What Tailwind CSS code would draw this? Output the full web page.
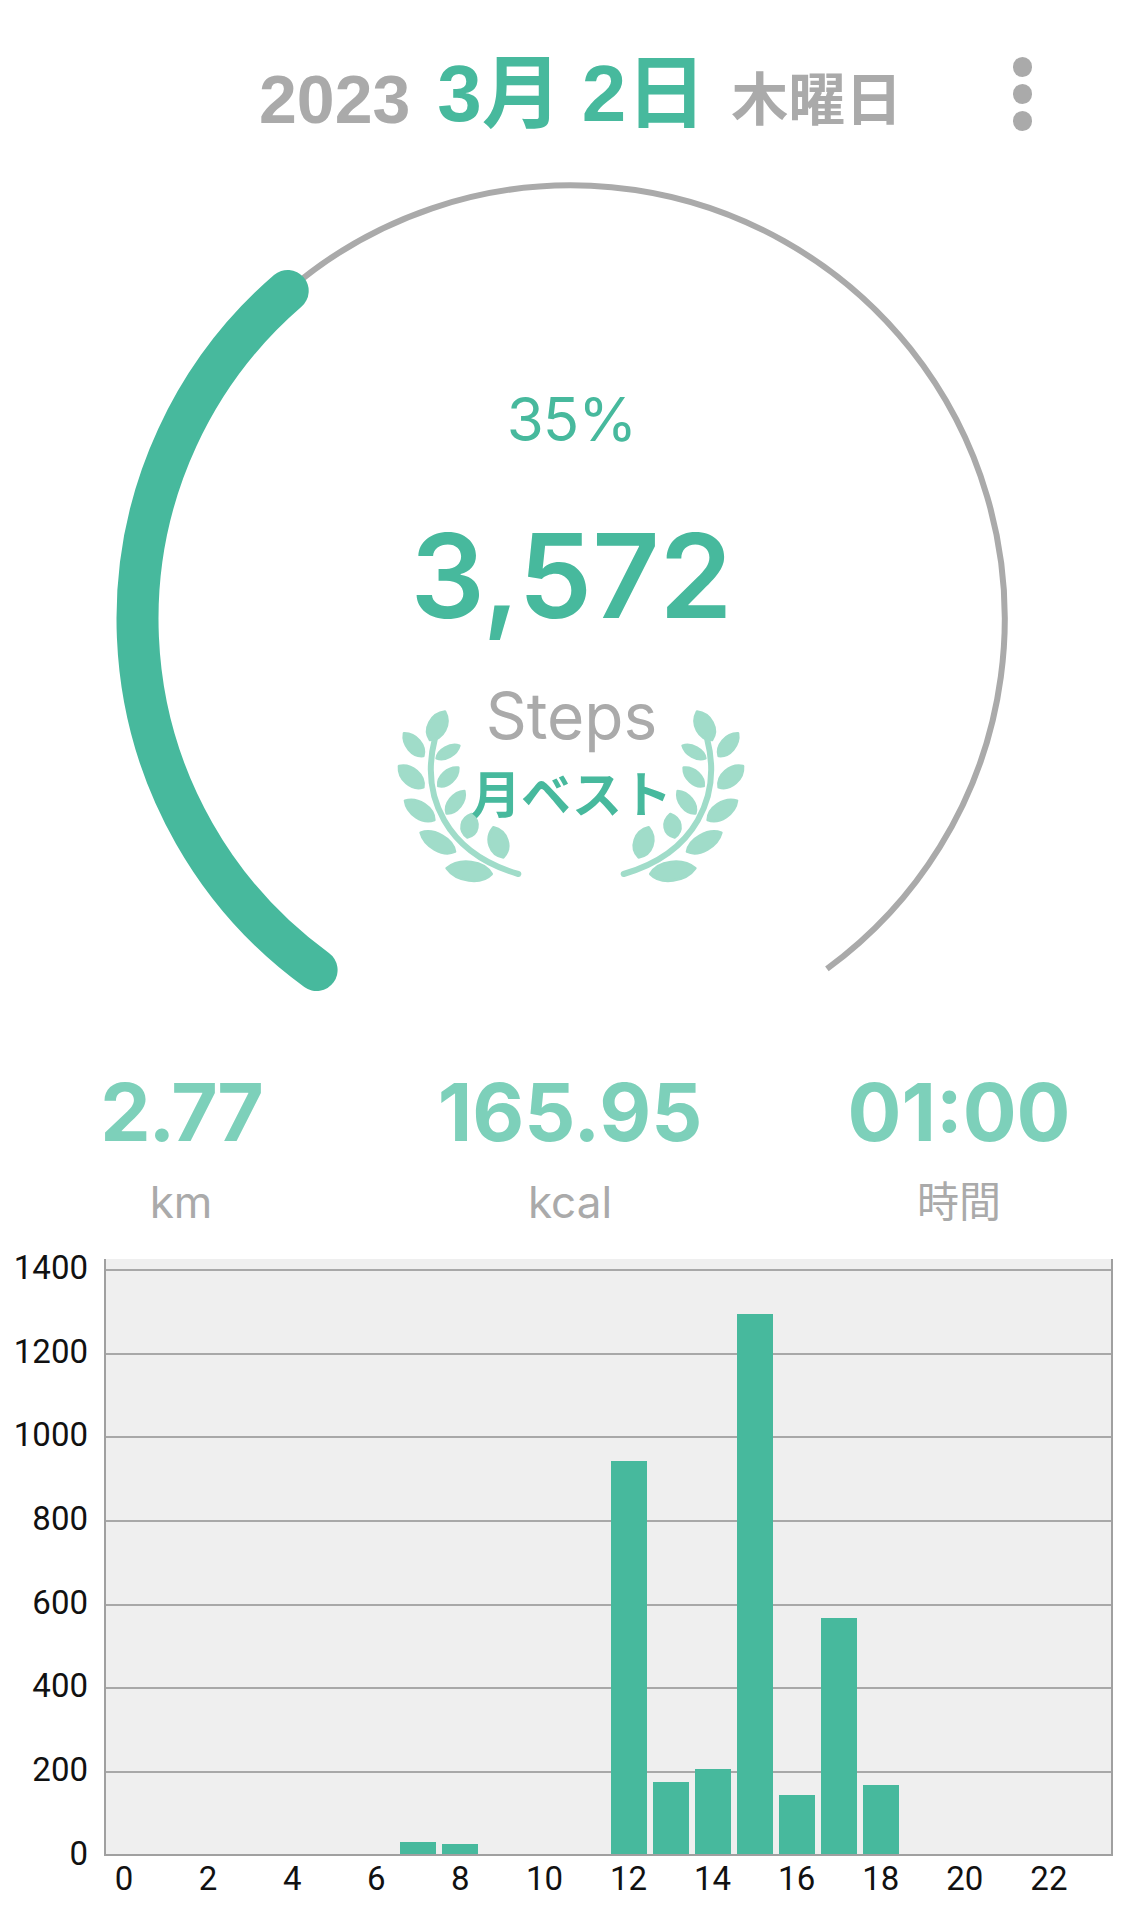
<!DOCTYPE html>
<html lang="ja">
<head>
<meta charset="utf-8">
<script src="https://cdn.jsdelivr.net/npm/@tailwindcss/browser@4"></script>
</head>
<body class="bg-white">
<div class="w-[1143px] h-[1920px] overflow-hidden bg-white font-['Inter','Noto_Sans_CJK_JP',sans-serif]">

  <!-- header -->
  <header class="h-[150px] pl-[259px] pr-[111px] flex items-start justify-between">
    <div class="flex items-baseline pt-[46px] h-[150px] font-['Liberation_Sans','Noto_Sans_CJK_JP',sans-serif] font-bold">
      <span class="text-[68px] leading-[100px] text-[#aaaaaa]">2023</span>
      <span class="ml-[27px] -translate-y-[2px] text-[80px] leading-[100px] text-[#47b99d]">3月</span>
      <span class="ml-[20px] -translate-y-[2px] text-[80px] leading-[100px] text-[#47b99d]">2日</span>
      <span class="ml-[25px] -translate-y-[3px] text-[57px] leading-[100px] text-[#aaaaaa]">木曜日</span>
    </div>
    <div class="pt-[57px] flex flex-col gap-[7px]">
      <span class="block w-[19px] h-[20px] rounded-full bg-[#aaaaaa]"></span>
      <span class="block w-[19px] h-[20px] rounded-full bg-[#aaaaaa]"></span>
      <span class="block w-[19px] h-[20px] rounded-full bg-[#aaaaaa]"></span>
    </div>
  </header>

  <!-- gauge -->
  <section class="relative h-[880px]">
    <svg class="absolute left-0 top-0" width="1143" height="880" viewBox="0 150 1143 880" fill="none">
      <path d="M287.7 290.9 A433.5 433.5 0 1 1 826.9 968.9" stroke="#aaaaaa" stroke-width="6"/>
      <path d="M287.7 290.9 A433.5 433.5 0 0 0 316.6 970" stroke="#47b99d" stroke-width="42" stroke-linecap="round"/>
    </svg>
    <svg class="absolute left-[380px] top-[530px]" width="380" height="230" viewBox="0 0 1140 690">
      <g id="laurel" fill="#a0dcc9" stroke="#a0dcc9" stroke-width="8" stroke-linejoin="round">
        <path d="M165 175 C120 350 200 520 415 582" fill="none" stroke-width="18" stroke-linecap="round"/>
        <path d="M150 180 C190 179 215 132 195 95 C153 100 128 147 150 180Z"/>
        <path d="M130 228 C139 196 108 159 72 160 C66 195 97 232 130 228Z"/>
        <path d="M170 235 C194 245 231 224 238 197 C211 188 174 209 170 235Z"/>
        <path d="M130 322 C136 285 96 250 57 258 C54 298 94 333 130 322Z"/>
        <path d="M175 318 C203 325 236 295 235 263 C204 259 171 289 175 318Z"/>
        <path d="M163 420 C162 382 114 350 75 362 C80 402 128 434 163 420Z"/>
        <path d="M200 400 C231 402 260 365 253 333 C220 335 191 372 200 400Z"/>
        <path d="M262 472 C296 464 303 426 275 402 C241 414 234 452 262 472Z"/>
        <path d="M225 515 C219 476 163 444 122 458 C133 500 189 532 225 515Z"/>
        <path d="M370 532 C399 502 382 452 340 442 C312 476 329 526 370 532Z"/>
        <path d="M335 582 C313 542 239 532 200 565 C229 606 303 616 335 582Z"/>
      </g>
      <use href="#laurel" transform="matrix(-1 0 0 1 1146 0)"/>
    </svg>
    <div class="relative flex flex-col items-center pt-[229px]">
      <div class="h-[80px] text-[60px] leading-[80px] tracking-[-1px] text-[#47b99d]">35%</div>
      <div class="mt-[57px] h-[120px] text-[117px] leading-[120px] font-semibold text-[#47b99d]">3,572</div>
      <div class="mt-[40px] h-[80px] text-[64px] leading-[80px] text-[#aaaaaa]">Steps</div>
      <div class="mt-[1px] h-[76px] text-[50px] leading-[76px] font-semibold text-[#47b99d]">月ベスト</div>
    </div>
  </section>

  <!-- stats -->
  <section class="h-[198px] pl-[31px] pr-[34px] flex justify-between">
    <div class="w-[300px] flex flex-col items-center">
      <div class="pt-[37px] h-[147px] text-[80px] leading-[90px] tracking-[-2px] font-bold text-[#7dd0ba]">2.77</div>
      <div class="h-[50px] text-[44px] leading-[50px] text-[#aaaaaa]">km</div>
    </div>
    <div class="w-[300px] flex flex-col items-center">
      <div class="pt-[37px] h-[147px] text-[80px] leading-[90px] font-bold text-[#7dd0ba]">165.95</div>
      <div class="h-[50px] text-[44px] leading-[50px] text-[#aaaaaa]">kcal</div>
    </div>
    <div class="w-[300px] flex flex-col items-center">
      <div class="pt-[37px] h-[147px] text-[80px] leading-[90px] font-bold text-[#7dd0ba]">01:00</div>
      <div class="h-[50px] text-[42px] leading-[50px] text-[#aaaaaa]">時間</div>
    </div>
  </section>

  <!-- chart -->
  <section class="flex font-['Roboto',sans-serif] text-[#111111] text-[33px]">
    <div class="w-[104px] -mt-[2px] pr-[16px] text-right">
      <div class="h-[83.7px] leading-[83.7px]">1400</div>
      <div class="h-[83.7px] leading-[83.7px]">1200</div>
      <div class="h-[83.7px] leading-[83.7px]">1000</div>
      <div class="h-[83.7px] leading-[83.7px]">800</div>
      <div class="h-[83.7px] leading-[83.7px]">600</div>
      <div class="h-[83.7px] leading-[83.7px]">400</div>
      <div class="h-[83.7px] leading-[83.7px]">200</div>
      <div class="h-[83.7px] leading-[83.7px]">0</div>
    </div>
    <div class="w-[1009px]">
      <div class="relative mt-[31px] h-[597px] pt-[10px] bg-[#efefef] border-l-2 border-r-2 border-b-2 border-[#a0a0a0]">
        <div class="h-[83.7px] border-t-2 border-[#a8a8a8]"></div>
        <div class="h-[83.7px] border-t-2 border-[#a8a8a8]"></div>
        <div class="h-[83.7px] border-t-2 border-[#a8a8a8]"></div>
        <div class="h-[83.7px] border-t-2 border-[#a8a8a8]"></div>
        <div class="h-[83.7px] border-t-2 border-[#a8a8a8]"></div>
        <div class="h-[83.7px] border-t-2 border-[#a8a8a8]"></div>
        <div class="h-[83.7px] border-t-2 border-[#a8a8a8]"></div>
        <div class="absolute left-[-3px] right-[-1px] bottom-0 top-0 grid grid-cols-24 items-end">
          <div></div><div></div><div></div><div></div><div></div><div></div><div></div>
          <div class="mx-[3px] h-[12px] bg-[#47b99d]"></div>
          <div class="mx-[3px] h-[10px] bg-[#47b99d]"></div>
          <div></div><div></div><div></div>
          <div class="mx-[3px] h-[393px] bg-[#47b99d]"></div>
          <div class="mx-[3px] h-[72px] bg-[#47b99d]"></div>
          <div class="mx-[3px] h-[85px] bg-[#47b99d]"></div>
          <div class="mx-[3px] h-[540px] bg-[#47b99d]"></div>
          <div class="mx-[3px] h-[59px] bg-[#47b99d]"></div>
          <div class="mx-[3px] h-[236px] bg-[#47b99d]"></div>
          <div class="mx-[3px] h-[69px] bg-[#47b99d]"></div>
          <div></div><div></div><div></div><div></div><div></div>
        </div>
      </div>
      <div class="flex pt-[5px] -ml-[22px] text-center leading-[36px]">
        <div class="w-[84.08px]">0</div><div class="w-[84.08px]">2</div><div class="w-[84.08px]">4</div><div class="w-[84.08px]">6</div><div class="w-[84.08px]">8</div><div class="w-[84.08px]">10</div><div class="w-[84.08px]">12</div><div class="w-[84.08px]">14</div><div class="w-[84.08px]">16</div><div class="w-[84.08px]">18</div><div class="w-[84.08px]">20</div><div class="w-[84.08px]">22</div>
      </div>
    </div>
  </section>
</div>
</body>
</html>
